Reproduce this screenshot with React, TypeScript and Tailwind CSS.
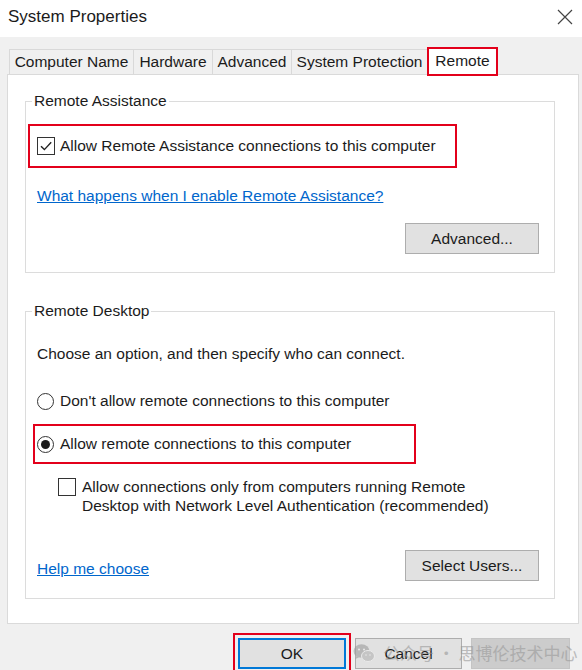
import React from "react";

const tabs = [
  { label: "Computer Name", w: "w-[124px]" },
  { label: "Hardware", w: "w-[79px]" },
  { label: "Advanced", w: "w-[79px]" },
  { label: "System Protection", w: "w-[136px]" },
];

function CheckBox({ checked }: { checked?: boolean }) {
  return (
    <span className="flex h-[18px] w-[18px] shrink-0 items-center justify-center border border-[#333333] bg-white">
      {checked && (
        <svg width="14" height="14" viewBox="0 0 14 14" fill="none">
          <path d="M2 7.2 L5.4 10.6 L12.2 3.2" stroke="#222222" strokeWidth="1.4" />
        </svg>
      )}
    </span>
  );
}

function Radio({ checked }: { checked?: boolean }) {
  return (
    <span className="flex h-[17px] w-[17px] shrink-0 items-center justify-center rounded-full border border-[#333333] bg-white">
      {checked && <span className="h-[9px] w-[9px] rounded-full bg-[#1a1a1a]" />}
    </span>
  );
}

function Button({ children, className = "" }: { children?: React.ReactNode; className?: string }) {
  return (
    <div
      className={`flex h-[31px] items-center justify-center border border-[#adadad] bg-[#e1e1e1] text-[15.5px] ${className}`}
    >
      {children}
    </div>
  );
}

export default function App() {
  return (
    <div className="relative h-[670px] w-[582px] overflow-hidden bg-[#f0f0f0] text-[#1b1b1b] [font-family:'Liberation_Sans',Arial,sans-serif]">
      {/* title bar */}
      <div className="flex h-[37px] items-center justify-between bg-white pl-[8px] pr-[9px]">
        <span className="pb-[3px] text-[17px]">System Properties</span>
        <svg width="16" height="16" viewBox="0 0 16 16" className="mb-[4px]">
          <path d="M1 1 L15 15 M15 1 L1 15" stroke="#444444" strokeWidth="1.2" />
        </svg>
      </div>

      {/* tabs */}
      <div className="ml-[9px] mt-[10px] flex h-[27px] items-end">
        {tabs.map((t) => (
          <div
            key={t.label}
            className={`flex h-[25px] items-center justify-center border border-b-0 border-r-0 border-[#d9d9d9] bg-[#f0f0f0] text-[15.5px] ${t.w}`}
          >
            {t.label}
          </div>
        ))}
        <div className="relative z-10 -mb-[2px] flex h-[29px] w-[71px] items-center justify-center border-2 border-[#e3001b] bg-white pb-[2px] text-[15.5px]">
          Remote
        </div>
      </div>

      {/* tab panel */}
      <div className="ml-[7px] h-[550px] w-[572px] border border-[#dadada] bg-white pl-[17px] pr-[23px] pt-[16px] text-[15.5px]">
        <fieldset className="border border-[#dcdcdc] pb-[18px]">
          <legend className="ml-[6px] px-[2px] leading-[20px]">Remote Assistance</legend>
          <div className="ml-[2px] mt-[13px] flex h-[44px] w-[429px] items-center gap-[5px] border-2 border-[#e3001b] pl-[7px]">
            <CheckBox checked />
            <span>Allow Remote Assistance connections to this computer</span>
          </div>
          <div className="ml-[11px] mt-[18px] leading-[20px] text-[#0066cc] underline">
            What happens when I enable Remote Assistance?
          </div>
          <div className="mr-[15px] mt-[17px] flex justify-end">
            <Button className="w-[134px]">Advanced...</Button>
          </div>
        </fieldset>

        <fieldset className="mt-[28px] border border-[#dcdcdc] pb-[17px]">
          <legend className="ml-[6px] px-[2px] leading-[20px]">Remote Desktop</legend>
          <div className="ml-[11px] mt-[23px] leading-[20px]">
            Choose an option, and then specify who can connect.
          </div>
          <div className="ml-[11px] mt-[27px] flex items-center gap-[6px] leading-[20px]">
            <Radio />
            <span>Don't allow remote connections to this computer</span>
          </div>
          <div className="ml-[7px] mt-[13px] flex h-[40px] w-[383px] items-center gap-[6px] border-2 border-[#e3001b] pl-[2px]">
            <Radio checked />
            <span>Allow remote connections to this computer</span>
          </div>
          <div className="ml-[32px] mt-[13px] flex items-start gap-[6px]">
            <span className="mt-[1px]">
              <CheckBox />
            </span>
            <span className="leading-[19px]">
              Allow connections only from computers running Remote
              <br />
              Desktop with Network Level Authentication (recommended)
            </span>
          </div>
          <div className="mr-[15px] mt-[35px] flex items-end justify-between">
            <span className="ml-[11px] pb-[2px] leading-[20px] text-[#0066cc] underline">Help me choose</span>
            <Button className="w-[134px]">Select Users...</Button>
          </div>
        </fieldset>
      </div>

      {/* dialog buttons */}
      <div className="ml-[233px] mt-[9px] flex items-start">
        <div className="border-2 border-[#e3001b] p-[3px]">
          <div className="flex h-[31px] w-[108px] items-center justify-center border-2 border-[#0078d7] bg-[#e1e1e1] text-[15.5px]">
            OK
          </div>
        </div>
        <Button className="ml-[4px] mt-[5px] w-[107px]">Cancel</Button>
        <div className="ml-[9px] mt-[5px] h-[31px] w-[99px] border border-[#c4c4c4] bg-[#cccccc]" />
      </div>

      {/* watermark */}
      <div className="pointer-events-none absolute left-[353px] top-[640px] flex items-center gap-[8px] opacity-60">
        <svg width="22" height="20" viewBox="0 0 22 20">
          <ellipse cx="8.5" cy="8" rx="8" ry="6.8" fill="#9c9c9c" />
          <path d="M3.5 12.5 L2.5 16 L6.5 14" fill="#9c9c9c" />
          <ellipse cx="15" cy="13" rx="6.5" ry="5.5" fill="#b3b3b3" stroke="#f0f0f0" strokeWidth="1" />
          <circle cx="6" cy="6.5" r="1" fill="#f0f0f0" />
          <circle cx="11" cy="6.5" r="1" fill="#f0f0f0" />
          <circle cx="13" cy="12" r="0.8" fill="#f0f0f0" />
          <circle cx="17" cy="12" r="0.8" fill="#f0f0f0" />
        </svg>
        <span className="text-[17px] text-[#999999] [font-family:'Noto_Sans_CJK_SC',sans-serif]">
          公众号 · 思博伦技术中心
        </span>
      </div>
    </div>
  );
}
